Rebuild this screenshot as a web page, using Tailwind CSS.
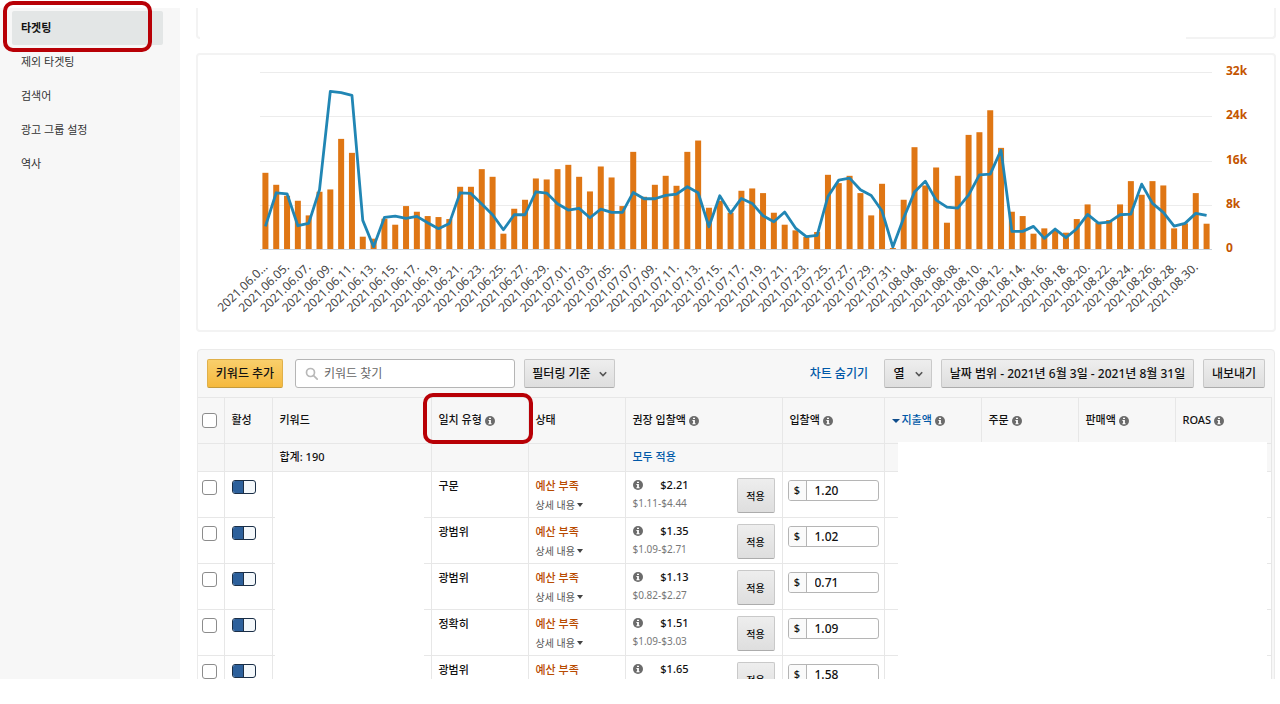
<!DOCTYPE html>
<html lang="ko">
<head>
  <meta charset="UTF-8">
  <meta name="viewport" content="width=device-width, initial-scale=1.0">
  <title>타겟팅</title>
  <script src="https://cdn.jsdelivr.net/npm/@tailwindcss/browser@4"></script>
  <style>
    body {
      font-family: 'Noto Sans', 'Noto Sans CJK KR', sans-serif;
    }
  </style>
</head>
<body class="bg-white text-[#111] text-[11px] leading-[18px]">

  <!-- info icon -->
  <svg class="hidden">
    <symbol id="info" viewBox="0 0 10 10">
      <circle cx="5" cy="5" r="5" fill="#6b6b6b"/>
      <path d="M4 1.7h2v1.4H4zM3.4 4h2.5v3.3h.7v1H3.4v-1h.7V5h-.7z" fill="#fff"/>
    </symbol>
  </svg>

  <div class="h-screen pt-2 pb-[25px]">
    <div class="flex h-full">

      <!-- side menu -->
      <nav class="w-[180px] shrink-0 bg-[#f7f7f7] pt-[3px] text-[#333]">
        <div class="relative ml-3 mr-[17px]">
          <a href="#" class="flex items-center h-[34px] pl-[9px] rounded-xs bg-[#e3e6e6] font-bold text-[#111]">타겟팅</a>
          <div class="absolute -left-[9px] -top-[10px] w-[149px] h-[51px] border-4 border-[#b80006] rounded-[10px]"></div>
        </div>
        <a href="#" class="flex items-center h-[34px] pl-[21px]">제외 타겟팅</a>
        <a href="#" class="flex items-center h-[34px] pl-[21px]">검색어</a>
        <a href="#" class="flex items-center h-[34px] pl-[21px]">광고 그룹 설정</a>
        <a href="#" class="flex items-center h-[34px] pl-[21px]">역사</a>
      </nav>

      <main class="flex-1 min-w-0 pl-4 pr-1 overflow-hidden">

        <!-- end of the metrics card -->
        <div class="relative h-[31px] border-2 border-t-0 border-[#f3f3f3] rounded-b-sm">
          <div class="absolute left-0.5 right-[88px] -bottom-0.5 h-1 bg-white"></div>
        </div>

        <!-- chart -->
        <section class="mt-3.5 border-2 border-[#f3f3f3] rounded-sm">
          <svg id="chart" viewBox="0 0 1076 275" class="block w-full"></svg>
        </section>

        <!-- keywords -->
        <section class="relative mt-[17px] ml-px mr-px border border-[#ebebeb] rounded-t-sm bg-[#f7f7f7]">
          <div class="flex items-center h-[47px] pl-[9px] pr-[9px] text-xs font-medium">
            <button class="h-[29px] w-[76px] rounded-xs border border-[#e0b04a] border-b-[#c39a3c] bg-linear-to-b from-[#f9cf6b] to-[#f5b93c]">키워드 추가</button>
            <label class="ml-3 flex items-center w-[220px] h-[29px] px-2 rounded-[3px] border border-[#b5b5b5] bg-white">
              <svg class="size-[14px] ml-px shrink-0" viewBox="0 0 14 14" fill="none" stroke="#b8b8b8" stroke-width="1.7"><circle cx="5.5" cy="5.5" r="4"/><path d="M8.6 8.6l3.6 3.6" stroke-linecap="round"/></svg>
              <input type="text" aria-label="키워드 찾기" placeholder="키워드 찾기" class="ml-[5px] w-full font-normal outline-none placeholder:text-[#666]">
            </label>
            <button class="ml-[9px] flex items-center justify-center gap-2 h-[29px] w-[91px] rounded-xs border border-[#c9c9c9] border-b-[#acacac] bg-linear-to-b from-[#eeeeee] to-[#dedede]">필터링 기준
              <svg class="size-2" viewBox="0 0 8 8" fill="none" stroke="#555" stroke-width="1.6"><path d="M.8 2.2L4 5.6l3.2-3.4"/></svg>
            </button>
            <a href="#" class="ml-auto text-[#0059a8]">차트 숨기기</a>
            <button class="ml-4 flex items-center justify-center gap-2.5 h-[29px] w-[48px] rounded-xs border border-[#c9c9c9] border-b-[#acacac] bg-linear-to-b from-[#eeeeee] to-[#dedede]">열
              <svg class="size-2" viewBox="0 0 8 8" fill="none" stroke="#555" stroke-width="1.6"><path d="M.8 2.2L4 5.6l3.2-3.4"/></svg>
            </button>
            <button class="ml-[9px] h-[29px] w-[253px] whitespace-nowrap rounded-xs border border-[#c9c9c9] border-b-[#acacac] bg-linear-to-b from-[#eeeeee] to-[#dedede]">날짜 범위 - 2021년 6월 3일 - 2021년 8월 31일</button>
            <button class="ml-[9px] h-[29px] w-[62px] rounded-xs border border-[#c9c9c9] border-b-[#acacac] bg-linear-to-b from-[#eeeeee] to-[#dedede]">내보내기</button>
          </div>

          <div class="pr-0.5">
            <table class="w-full table-fixed border-t border-[#e7e7e7]">
              <colgroup>
                <col class="w-[26px]"><col class="w-[48px]"><col class="w-[159px]"><col class="w-[97px]"><col class="w-[97px]"><col class="w-[157px]"><col class="w-[102px]"><col class="w-[97px]"><col class="w-[97px]"><col class="w-[97px]"><col>
              </colgroup>
              <thead>
                <tr class="h-[46px] text-left border-b border-[#e7e7e7] *:border-r *:border-[#e7e7e7] *:font-medium *:pl-[7px] *:pb-0.5 *:whitespace-nowrap">
                  <th class="pl-1! pb-0!"><input type="checkbox" aria-label="모두 선택" class="block appearance-none size-[15px] rounded-[3px] border border-[#8c8c8c] bg-white"></th>
                  <th>활성</th>
                  <th>키워드</th>
                  <th class="relative">일치 유형 <svg class="inline size-[10px]"><use href="#info"/></svg>
                    <div class="absolute -left-[9px] -top-[5px] w-[110px] h-[51px] border-4 border-[#b80006] rounded-[10px]"></div>
                  </th>
                  <th>상태</th>
                  <th>권장 입찰액 <svg class="inline size-[10px]"><use href="#info"/></svg></th>
                  <th>입찰액 <svg class="inline size-[10px]"><use href="#info"/></svg></th>
                  <th class="text-[#0059a8]"><svg class="inline w-2 h-1 mr-0.5" viewBox="0 0 8 4"><path d="M0 0h8L4 4z" fill="#0f4d8c"/></svg>지출액 <svg class="inline size-[10px]"><use href="#info"/></svg></th>
                  <th>주문 <svg class="inline size-[10px]"><use href="#info"/></svg></th>
                  <th>판매액 <svg class="inline size-[10px]"><use href="#info"/></svg></th>
                  <th>ROAS <svg class="inline size-[10px]"><use href="#info"/></svg></th>
                </tr>
                <tr class="h-7 border-b border-[#e7e7e7] *:border-r *:border-[#e7e7e7] *:pl-[7px] *:pb-0.5 font-medium">
                  <td></td><td></td><td>합계: 190</td><td></td><td></td>
                  <td><a href="#" class="text-[#0059a8]">모두 적용</a></td>
                  <td></td><td></td><td></td><td></td><td></td>
                </tr>
              </thead>
              <tbody id="rows" class="bg-white"></tbody>
            </table>
          </div>

          <!-- hidden values -->
          <div class="absolute left-[77px] w-[149px] top-[122px] bottom-0 bg-white"></div>
          <div class="absolute left-[700px] right-[7px] top-[92px] bottom-0 bg-white"></div>
        </section>
      </main>
    </div>
  </div>

  <script>
    const keywords = [
      { type: '구문', price: '$2.21', range: '$1.11-$4.44', bid: '1.20' },
      { type: '광범위', price: '$1.35', range: '$1.09-$2.71', bid: '1.02' },
      { type: '광범위', price: '$1.13', range: '$0.82-$2.27', bid: '0.71' },
      { type: '정확히', price: '$1.51', range: '$1.09-$3.03', bid: '1.09' },
      { type: '광범위', price: '$1.65', bid: '1.58' },
    ];

    const details = `<button class="flex items-center gap-0.5 h-[19px] text-[10px] text-[#555]">상세 내용<svg class="w-[6px] h-1" viewBox="0 0 6 4"><path d="M0 0h6L3 4z" fill="#444"/></svg></button>`;

    document.getElementById('rows').innerHTML = keywords.map((k, i) => `
      <tr class="h-[46px] border-b border-[#e7e7e7] *:border-r *:border-[#e7e7e7] *:align-top *:pl-[7px]">
        <td class="pl-1! pt-2"><input type="checkbox" aria-label="키워드 ${i + 1} 선택" class="block appearance-none size-[15px] rounded-[3px] border border-[#8c8c8c] bg-white"></td>
        <td class="pt-2"><button role="switch" aria-checked="true" aria-label="활성" class="flex w-6 h-[14px] border border-[#1b2f47] rounded-[3px] bg-[#f4f8fb] overflow-hidden"><span class="w-[11px] h-full bg-[#2d609b] border-r border-[#1b2f47]"></span></button></td>
        <td></td>
        <td class="pt-[5px] font-medium">${k.type}</td>
        <td class="pt-[5px]">
          <div class="font-medium text-[#b84a00]">예산 부족</div>
          ${k.range ? details : ''}
        </td>
        <td>
          <div class="flex justify-between pr-[7px]">
            <div class="w-14 pt-1">
              <div class="flex items-center justify-between font-medium"><svg class="size-[10px]"><use href="#info"/></svg>${k.price}</div>
              <div class="text-[10px] leading-[19px] text-[#777]">${k.range || ''}</div>
            </div>
            <button class="mt-[6px] w-[38px] h-[35px] rounded-xs border border-[#c9c9c9] border-b-[#acacac] bg-linear-to-b from-[#eeeeee] to-[#dedede] text-[10px] font-medium">적용</button>
          </div>
        </td>
        <td class="pl-[5px]! pt-2">
          <label class="flex w-[91px] h-[21px] border border-[#b5b5b5] rounded-[3px] overflow-hidden font-medium">
            <span class="w-[18px] shrink-0 border-r border-[#b5b5b5] bg-[#fafafa] text-center">$</span>
            <input type="text" value="${k.bid}" aria-label="입찰액" class="w-full pl-2 text-xs outline-none">
          </label>
        </td>
        <td></td><td></td><td></td><td></td>
      </tr>`).join('');

    // daily values, 532 = 32k
    const spend = [229,193,160,145,101,172,179,331,289,37,31,91,73,129,112,99,96,90,187,187,240,217,46,121,148,212,209,
      240,253,217,173,248,215,129,292,157,193,220,190,292,326,124,145,109,175,182,168,109,73,56,36,51,223,198,220,168,101,196,3,
      148,306,191,245,79,220,343,351,417,304,112,99,46,62,56,49,90,134,78,87,134,204,163,204,191,62,77,168,76];
    const clicks = [68,169,166,70,77,178,474,470,462,86,7,95,99,92,98,79,61,77,169,167,135,103,58,103,103,172,168,
      136,117,122,94,120,110,110,170,151,151,161,165,187,169,67,160,108,152,137,100,82,111,63,37,41,158,207,213,178,161,114,6,
      93,171,204,147,126,123,162,223,225,297,53,53,68,32,60,34,61,104,78,81,103,105,195,137,110,69,77,107,101];

    const left = 62, right = 1014, base = 194, plotHeight = 177;
    const step = (right - left) / spend.length;
    const xAt = i => left + step * (i + 0.5);
    const yAt = v => base - v / 532 * plotHeight;

    const dates = ['2021.06.0…'];
    for (let d = 5; d <= 29; d += 2) dates.push(`2021.06.${String(d).padStart(2, '0')}.`);
    for (let d = 1; d <= 31; d += 2) dates.push(`2021.07.${String(d).padStart(2, '0')}.`);
    for (let d = 4; d <= 30; d += 2) dates.push(`2021.08.${String(d).padStart(2, '0')}.`);

    let svg = '';
    ['0', '8k', '16k', '24k', '32k'].forEach((label, i) => {
      const y = Math.round(base - i * plotHeight / 4);
      svg += `<path d="M${left} ${y + 0.5}H${right}" stroke="${i ? '#ececec' : '#c9d3dc'}"/>`;
      svg += `<text x="1028" y="${y + 3}" class="text-xs font-bold" fill="#c45500">${label}</text>`;
    });
    spend.forEach((v, i) => {
      svg += `<rect x="${xAt(i) - 3}" y="${yAt(v)}" width="6" height="${base - yAt(v)}" fill="#df7614"/>`;
    });
    svg += `<polyline points="${clicks.map((v, i) => `${xAt(i)},${yAt(v)}`).join(' ')}" fill="none" stroke="#2186b4" stroke-width="2.8" stroke-linejoin="round"/>`;
    dates.forEach((date, i) => {
      svg += `<text transform="translate(${xAt(i * 2) + 3} 213) rotate(-44)" text-anchor="end" class="text-xs" fill="#444">${date}</text>`;
    });
    document.getElementById('chart').innerHTML = svg;
  </script>

</body>
</html>
